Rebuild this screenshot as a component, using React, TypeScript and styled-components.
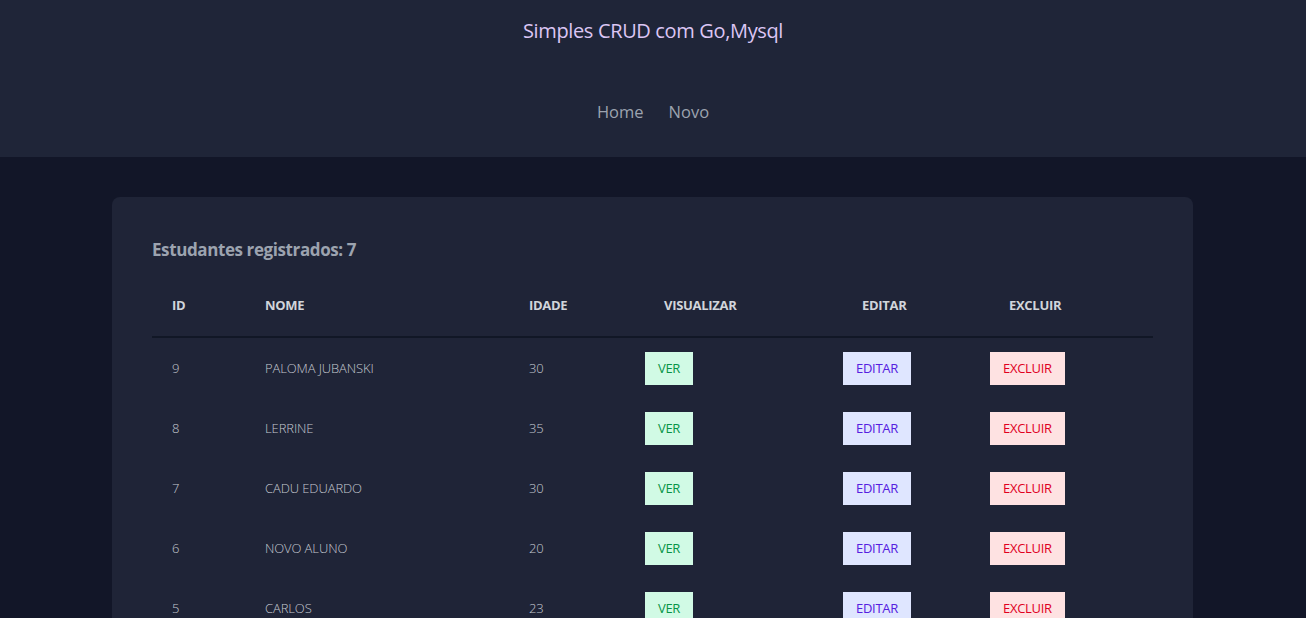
import styled, { createGlobalStyle } from "styled-components";

const students = [
  { id: 9, nome: "PALOMA JUBANSKI", idade: 30 },
  { id: 8, nome: "LERRINE", idade: 35 },
  { id: 7, nome: "CADU EDUARDO", idade: 30 },
  { id: 6, nome: "NOVO ALUNO", idade: 20 },
  { id: 5, nome: "CARLOS", idade: 23 },
  { id: 4, nome: "MARIA", idade: 28 },
  { id: 3, nome: "JOAO", idade: 25 },
];

const columns = "93px 264px 116px 198px 147px 183px";

export default function App() {
  return (
    <>
      <GlobalStyle />
      <Header>
        <Title>Simples CRUD com Go,Mysql</Title>
        <Nav>
          <NavLink>Home</NavLink>
          <NavLink>Novo</NavLink>
        </Nav>
      </Header>
      <Main>
        <Card>
          <Heading>Estudantes registrados: {students.length}</Heading>
          <HeadRow>
            <Th>ID</Th>
            <Th>NOME</Th>
            <Th>IDADE</Th>
            <Th wide>VISUALIZAR</Th>
            <Th wide>EDITAR</Th>
            <Th wide>EXCLUIR</Th>
          </HeadRow>
          {students.map((s) => (
            <Row key={s.id}>
              <Td>{s.id}</Td>
              <Td>{s.nome}</Td>
              <Td>{s.idade}</Td>
              <Td>
                <ActionBtn kind="ver">VER</ActionBtn>
              </Td>
              <Td>
                <ActionBtn kind="editar">EDITAR</ActionBtn>
              </Td>
              <Td>
                <ActionBtn kind="excluir">EXCLUIR</ActionBtn>
              </Td>
            </Row>
          ))}
        </Card>
      </Main>
    </>
  );
}

const GlobalStyle = createGlobalStyle`
  body {
    margin: 0;
    background: #121628;
    font-family: "Open Sans", "Noto Sans", sans-serif;
  }
`;

const Header = styled.header`
  height: 157px;
  background: #1f2538;
  display: flex;
  flex-direction: column;
  align-items: center;
`;

const Title = styled.h1`
  margin: 17px 0 0;
  font-size: 20px;
  font-weight: 400;
  line-height: 28px;
  color: #dcc6f4;
  letter-spacing: -0.35px;
`;

const Nav = styled.nav`
  margin-top: 55px;
  display: flex;
  gap: 25px;
`;

const NavLink = styled.a`
  font-size: 16.5px;
  line-height: 24px;
  color: #9ca3af;
  cursor: pointer;
`;

const Main = styled.main`
  padding: 40px 113px 0 112px;
`;

const Card = styled.section`
  background: #1f2437;
  border-radius: 8px;
  padding: 40px 40px 40px;
`;

const Heading = styled.h2`
  margin: 0 0 11px;
  font-size: 17px;
  font-weight: 700;
  line-height: 26px;
  color: #9ca3af;
  letter-spacing: -0.4px;
`;

const HeadRow = styled.div`
  display: grid;
  grid-template-columns: ${columns};
  height: 62px;
  align-items: center;
  border-bottom: 2px solid #111726;
`;

const Th = styled.div<{ wide?: boolean }>`
  padding-left: ${(p) => (p.wide ? "39px" : "20px")};
  font-size: 13px;
  font-weight: 700;
  color: #d1d5db;
  letter-spacing: -0.3px;
`;

const Row = styled.div`
  display: grid;
  grid-template-columns: ${columns};
  height: 60px;
  align-items: center;
`;

const Td = styled.div`
  padding-left: 20px;
  font-size: 13px;
  font-weight: 300;
  color: #c4c8d0;
  letter-spacing: -0.1px;
`;

const palette = {
  ver: { bg: "#d1fae5", fg: "#079447" },
  editar: { bg: "#dfe6ff", fg: "#5520e0" },
  excluir: { bg: "#fee2e2", fg: "#e0001f" },
};

const ActionBtn = styled.button<{ kind: keyof typeof palette }>`
  height: 33px;
  padding: 0 13px;
  border: none;
  font-family: inherit;
  font-size: 13px;
  font-weight: 400;
  letter-spacing: -0.3px;
  background: ${(p) => palette[p.kind].bg};
  color: ${(p) => palette[p.kind].fg};
  cursor: pointer;
`;
